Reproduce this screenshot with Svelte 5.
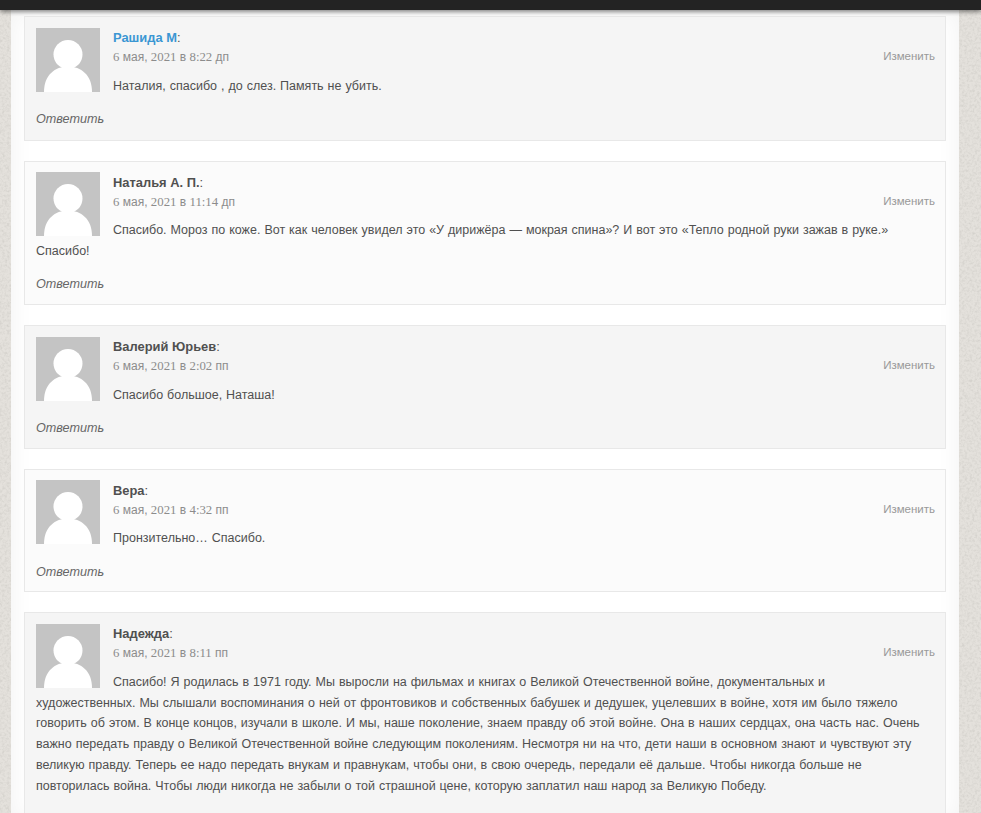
<script lang="ts">
  const comments = [
    { author: 'Рашида М', link: true, date: '6 мая, 2021 в 8:22 дп', text: 'Наталия, спасибо , до слез. Память не убить.' },
    { author: 'Наталья А. П.', date: '6 мая, 2021 в 11:14 дп', text: 'Спасибо. Мороз по коже. Вот как человек увидел это «У дирижёра — мокрая спина»? И вот это «Тепло родной руки зажав в руке.» Спасибо!' },
    { author: 'Валерий Юрьев', date: '6 мая, 2021 в 2:02 пп', text: 'Спасибо большое, Наташа!' },
    { author: 'Вера', date: '6 мая, 2021 в 4:32 пп', text: 'Пронзительно… Спасибо.' },
    { author: 'Надежда', date: '6 мая, 2021 в 8:11 пп', text: 'Спасибо! Я родилась в 1971 году. Мы выросли на фильмах и книгах о Великой Отечественной войне, документальных и художественных. Мы слышали воспоминания о ней от фронтовиков и собственных бабушек и дедушек, уцелевших в войне, хотя им было тяжело говорить об этом. В конце концов, изучали в школе. И мы, наше поколение, знаем правду об этой войне. Она в наших сердцах, она часть нас. Очень важно передать правду о Великой Отечественной войне следующим поколениям. Несмотря ни на что, дети наши в основном знают и чувствуют эту великую правду. Теперь ее надо передать внукам и правнукам, чтобы они, в свою очередь, передали её дальше. Чтобы никогда больше не повторилась война. Чтобы люди никогда не забыли о той страшной цене, которую заплатил наш народ за Великую Победу.' },
  ];

  // Digits are in a slab face, the Cyrillic falls back to the sans.
  const dateParts = (d: string) => d.split(/([\d:]+)/);
</script>

<div class="page">
  <svg class="texture" aria-hidden="true">
    <filter id="paper">
      <feTurbulence type="fractalNoise" baseFrequency="0.4" numOctaves="3" seed="4" />
      <feColorMatrix values="0 0 0 0 0.42  0 0 0 0 0.41  0 0 0 0 0.38  0.4 0.4 0 0 -0.34" />
    </filter>
    <rect width="100%" height="100%" filter="url(#paper)" />
  </svg>
  <div class="topbar"></div>
  <main class="wrap">
    <ol class="list">
      {#each comments as c, i}
        <li class="comment" class:odd={i % 2 === 0}>
          <div class="avatar">
            <svg viewBox="0 0 64 64" width="64" height="64" aria-hidden="true">
              <rect width="64" height="64" fill="#c4c4c4" />
              <circle cx="32" cy="26.5" r="14.5" fill="#fff" />
              <path d="M8 64C8 47 19 38.5 32 38.5S56 47 56 64Z" fill="#fff" />
            </svg>
          </div>
          <div class="head">
            <div class="author"><b class:link={c.link}>{c.author}</b>:</div>
            <div class="date">
              {#each dateParts(c.date) as part, j}{#if j % 2}<span class="num">{part}</span>{:else}{part}{/if}{/each}
            </div>
          </div>
          <a class="edit" href="#top">Изменить</a>
          <p class="body">{c.text}</p>
          <div class="reply">Ответить</div>
        </li>
      {/each}
    </ol>
  </main>
</div>

<style>
  :global(body) {
    background: #e4e1dc;
  }
  .page {
    position: relative;
    height: 100vh;
    overflow: hidden;
    font-family: "Liberation Sans", Arial, sans-serif;
    color: #505050;
  }
  .texture {
    position: absolute;
    inset: 0;
    width: 100%;
    height: 100%;
  }
  .topbar {
    position: relative;
    z-index: 2;
    height: 10px;
    background: #232323;
    box-shadow: 0 2px 4px rgba(0, 0, 0, 0.45);
  }
  .wrap {
    position: relative;
    width: 948px;
    margin-left: 11px;
    height: 100%;
    background: #fff;
    box-shadow: inset 0 0 24px rgba(0, 0, 0, 0.06);
    padding: 6px 13px 0;
    box-sizing: border-box;
  }
  .list {
    list-style: none;
    margin: 0;
    padding: 0;
    display: flex;
    flex-direction: column;
    gap: 20px;
  }
  .comment {
    position: relative;
    border: 1px solid #e8e8e8;
    background: #fbfbfb;
    padding: 10.5px 10px 9px 11px;
  }
  .comment:first-child {
    padding-bottom: 10.2px;
  }
  .comment.odd {
    background: #f5f5f5;
  }
  .avatar {
    float: left;
    width: 64px;
    height: 64px;
    margin-right: 13px;
  }
  .avatar svg {
    display: block;
  }
  .head {
    height: 48.1px;
    box-sizing: border-box;
    padding-top: 2.6px;
  }
  .author {
    font-size: 12.9px;
    line-height: 16px;
  }
  .author .link {
    color: #3b97d3;
  }
  .date {
    font-size: 12px;
    line-height: 22px;
    color: #8c8c8c;
  }
  .num {
    font-family: "Liberation Serif", serif;
    font-size: 12.8px;
  }
  .edit {
    position: absolute;
    top: 33px;
    right: 10px;
    font-size: 11.5px;
    color: #999;
    text-decoration: none;
  }
  .body {
    margin: 0;
    padding-right: 10px;
    font-size: 12.5px;
    word-spacing: 0.5px;
    line-height: 20.8px;
  }
  .reply {
    clear: both;
    padding-top: 12.4px;
    font-size: 12.6px;
    line-height: 20.8px;
    font-style: italic;
    color: #666;
  }
</style>
